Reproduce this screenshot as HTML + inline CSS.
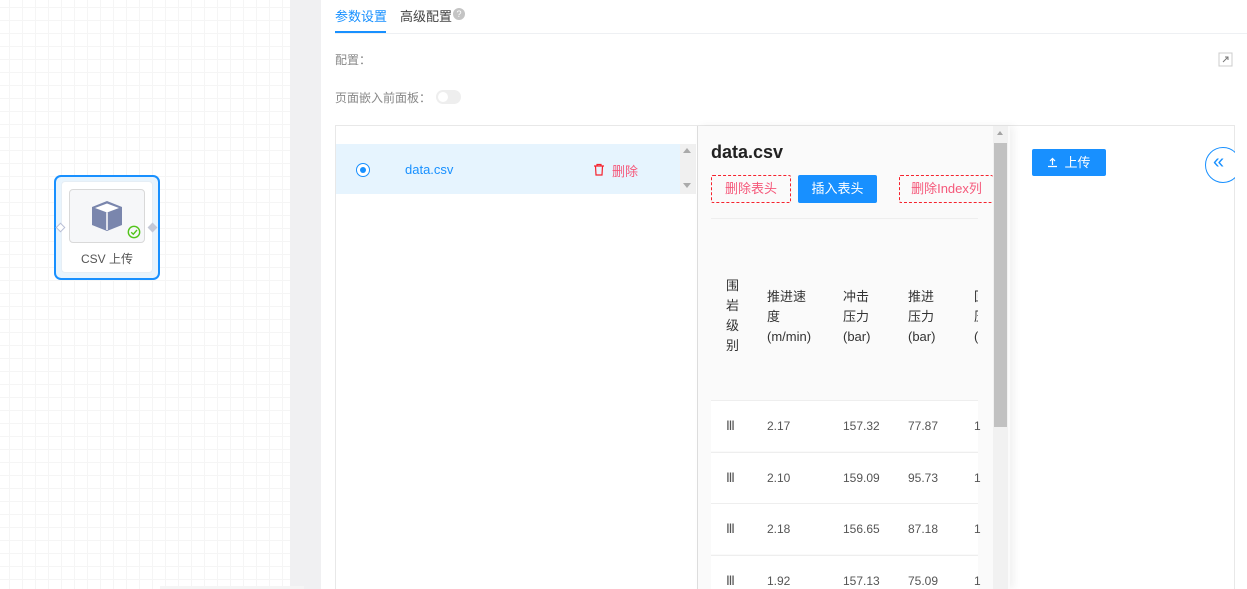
<!DOCTYPE html>
<html><head><meta charset="utf-8"><style>
*{margin:0;padding:0;box-sizing:border-box}
html,body{width:1247px;height:589px;overflow:hidden}
body{position:relative;background:#fff;font-family:"Liberation Sans","Noto Sans CJK SC",sans-serif;font-size:12px;color:#333}
.a{position:absolute}
.canvas{left:0;top:0;width:290px;height:589px;background-color:#fff;background-image:linear-gradient(#f5f5f5 1px,transparent 1px),linear-gradient(90deg,#f5f5f5 1px,transparent 1px);background-size:13px 13px;background-position:-4px 7px}
.gbar{left:290px;top:0;width:31px;height:589px;background:#f0f0f2}
.btn{position:absolute;font-size:13px;text-align:center;border-radius:2px}
.row{position:absolute;left:711px;width:267px;height:51px;background:#fff;border-top:1px solid #eee}
.row span{position:absolute;top:18px;font-size:12px;color:#555}
.row span.r{font-family:"Liberation Serif",serif;font-size:13px;top:17px}
</style></head><body>
<div class="a canvas"></div>
<div class="a gbar"></div>
<div class="a" style="left:160px;top:586px;width:144px;height:3px;background:#f5f5f5"></div>

<div class="a" style="left:54px;top:175px;width:106px;height:105px;border:2px solid #1890ff;border-radius:7px;background:#e8f4fd"></div>
<div class="a" style="left:61px;top:181px;width:92px;height:92px;background:#fff;border:1px solid #e6eef5;border-radius:4px"></div>
<div class="a" style="left:69px;top:189px;width:76px;height:54px;background:#f6f7f9;border:1px solid #d9d9d9;border-radius:4px"></div>
<svg class="a" style="left:89px;top:199px" width="36" height="34" viewBox="0 0 36 34"><path d="M18 2 L33 8 L33 26 L18 32 L3 26 L3 8Z" fill="#7a86ad"/><path d="M6 9 L18 4.5 L30 9 L18 13.5Z" fill="#fff"/><path d="M18 13.5 L18 31" stroke="#fff" stroke-width="1.5"/></svg>
<svg class="a" style="left:127px;top:225px" width="14" height="14" viewBox="0 0 14 14"><circle cx="7" cy="7" r="5.7" fill="none" stroke="#52c41a" stroke-width="1.4"/><path d="M4.2 7.2 L6.3 9.2 L10 5" fill="none" stroke="#52c41a" stroke-width="1.4"/></svg>
<div class="a" style="left:57px;top:224px;width:7px;height:7px;border:1px solid #b8bfd6;background:#fff;transform:rotate(45deg)"></div>
<div class="a" style="left:149px;top:224px;width:7px;height:7px;background:#c4c8d6;transform:rotate(45deg)"></div>
<div class="a" style="left:61px;top:250px;width:92px;text-align:center;font-size:12px;color:#555">CSV 上传</div>

<div class="a" style="left:335px;top:6px;color:#1890ff;font-size:13px">参数设置</div>
<div class="a" style="left:400px;top:6px;color:#444;font-size:13px">高级配置</div>
<div class="a" style="left:453px;top:8px;width:12px;height:12px;border-radius:50%;background:#c4c4c4;color:#fff;font-size:9px;text-align:center;line-height:12px">?</div>
<div class="a" style="left:335px;top:31px;width:51px;height:2px;background:#1890ff"></div>
<div class="a" style="left:335px;top:33px;width:912px;height:1px;background:#eef0f3"></div>
<div class="a" style="left:335px;top:51px;color:#888;font-size:12px">配置：</div>
<svg class="a" style="left:1218px;top:52px" width="15" height="15" viewBox="0 0 15 15"><rect x="1" y="1" width="13" height="13" fill="none" stroke="#ccc"/><path d="M5 10 L10 5 M7 5 H10 V8" stroke="#777" fill="none"/></svg>
<div class="a" style="left:335px;top:89px;color:#888;font-size:12px">页面嵌入前面板：</div>
<div class="a" style="left:436px;top:90px;width:25px;height:14px;border-radius:7px;background:#eeeeee"></div>
<div class="a" style="left:438px;top:92px;width:10px;height:10px;border-radius:50%;background:#fff"></div>

<div class="a" style="left:335px;top:125px;width:900px;height:470px;border:1px solid #e8e8e8"></div>
<div class="a" style="left:336px;top:144px;width:344px;height:50px;background:#e6f4fe"></div>
<div class="a" style="left:680px;top:144px;width:16px;height:50px;background:#f0f0f0"></div>
<div class="a" style="left:683px;top:148px;border:4px solid transparent;border-bottom:5px solid #aaa;border-top:0"></div>
<div class="a" style="left:683px;top:183px;border:4px solid transparent;border-top:5px solid #aaa;border-bottom:0"></div>
<div class="a" style="left:356px;top:163px;width:14px;height:14px;border-radius:50%;border:1.5px solid #1890ff;background:#fff"></div>
<div class="a" style="left:360px;top:167px;width:6px;height:6px;border-radius:50%;background:#1890ff"></div>
<div class="a" style="left:405px;top:162px;color:#1890ff;font-size:13px">data.csv</div>
<svg class="a" style="left:593px;top:163px" width="12" height="13" viewBox="0 0 12 13"><path d="M1 3 H11 M4 3 V1.5 H8 V3 M2.5 3 L3 12 H9 L9.5 3" fill="none" stroke="#f5222d" stroke-width="1.2"/></svg>
<div class="a" style="left:612px;top:161px;color:#f5587a;font-size:13px">删除</div>

<div class="a" style="left:697px;top:126px;width:313px;height:463px;background:#fafafa;box-shadow:4px 0 8px rgba(0,0,0,.06);border-left:1px solid #ddd"></div>
<div class="a" style="left:711px;top:142px;font-size:18px;color:#222;font-weight:bold">data.csv</div>
<div class="btn" style="left:711px;top:175px;width:80px;height:28px;border:1px dashed #f5222d;color:#f5587a;line-height:26px">删除表头</div>
<div class="btn" style="left:798px;top:175px;width:79px;height:28px;background:#1890ff;color:#fff;line-height:28px">插入表头</div>
<div class="btn" style="left:899px;top:175px;width:94px;height:28px;border:1px dashed #f5222d;border-right:none;color:#f5587a;line-height:26px">删除Index列</div>
<div class="a" style="left:711px;top:218px;width:267px;height:1px;background:#eee"></div>
<div class="a" style="left:726px;top:276px;font-size:13px;line-height:20px;width:14px">围岩级别</div>
<div class="a" style="left:767px;top:287px;font-size:13px;line-height:20px">推进速<br>度<br>(m/min)</div>
<div class="a" style="left:843px;top:287px;font-size:13px;line-height:20px">冲击<br>压力<br>(bar)</div>
<div class="a" style="left:908px;top:287px;font-size:13px;line-height:20px">推进<br>压力<br>(bar)</div>
<div class="a" style="left:974px;top:287px;font-size:13px;line-height:20px;width:4px;overflow:hidden">回<br>压<br>(</div>
<div class="row" style="top:400px"><span class="r" style="left:15px">Ⅲ</span><span style="left:56px">2.17</span><span style="left:132px">157.32</span><span style="left:197px">77.87</span><span style="left:263px">1</span></div>
<div class="row" style="top:452px"><span class="r" style="left:15px">Ⅲ</span><span style="left:56px">2.10</span><span style="left:132px">159.09</span><span style="left:197px">95.73</span><span style="left:263px">1</span></div>
<div class="row" style="top:503px"><span class="r" style="left:15px">Ⅲ</span><span style="left:56px">2.18</span><span style="left:132px">156.65</span><span style="left:197px">87.18</span><span style="left:263px">1</span></div>
<div class="row" style="top:555px;height:34px"><span class="r" style="left:15px">Ⅲ</span><span style="left:56px">1.92</span><span style="left:132px">157.13</span><span style="left:197px">75.09</span><span style="left:263px">1</span></div>
<div class="a" style="left:993px;top:126px;width:15px;height:463px;background:#f1f1f1"></div>
<div class="a" style="left:994px;top:143px;width:13px;height:284px;background:#c1c1c1"></div>
<div class="a" style="left:997px;top:131px;border:3.5px solid transparent;border-bottom:4px solid #a3a3a3;border-top:0"></div>

<div class="btn" style="left:1032px;top:149px;width:74px;height:27px;background:#1890ff;color:#fff;line-height:27px">
<svg width="11" height="11" viewBox="0 0 11 11" style="vertical-align:-1px;margin-right:6px"><path d="M5.5 8 V1.5 M3 4 L5.5 1.5 L8 4 M1 9.5 H10" stroke="#fff" fill="none" stroke-width="1.2"/></svg>上传</div>
<div class="a" style="left:1205px;top:147px;width:30px;height:36px;overflow:hidden"><div style="width:36px;height:36px;border:1px solid #1890ff;border-radius:18px;background:#fff"></div></div>
<div class="a" style="left:1213px;top:151px;color:#1890ff;font-size:20px">«</div>
</body></html>
